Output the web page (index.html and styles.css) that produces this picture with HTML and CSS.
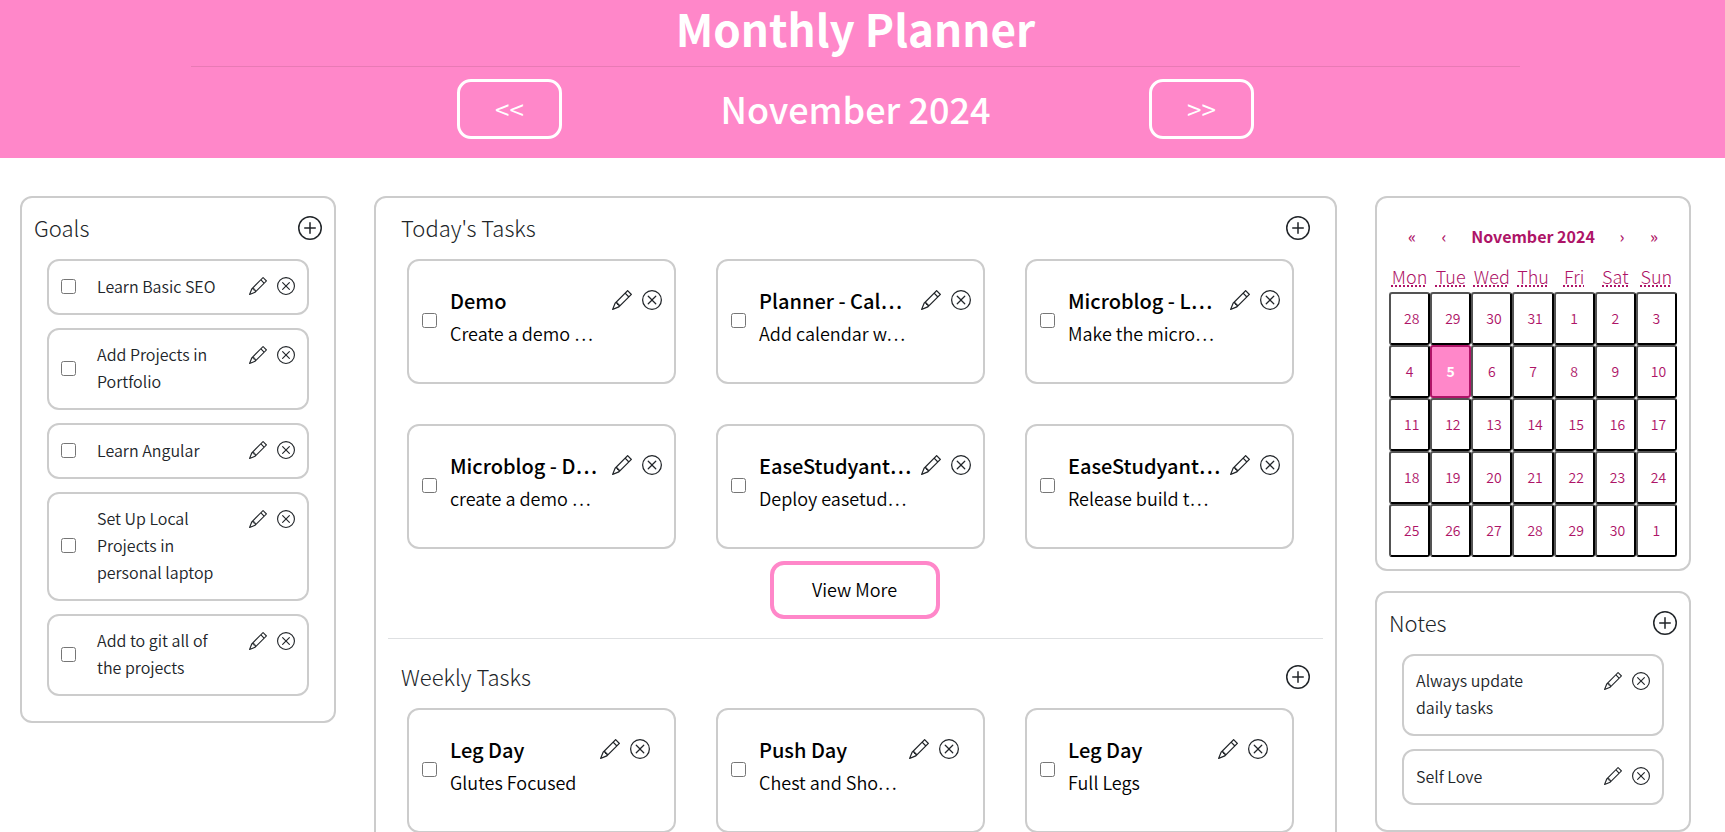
FILE: index.html
```html
<!DOCTYPE html>
<html lang="en">
<head>
<meta charset="utf-8">
<title>Monthly Planner</title>
<link rel="stylesheet" href="styles.css">
</head>
<body>
<svg class="sprite" aria-hidden="true">
  <symbol id="plus" viewBox="0 0 16 16"><path d="M8 15A7 7 0 1 1 8 1a7 7 0 0 1 0 14m0 1A8 8 0 1 0 8 0a8 8 0 0 0 0 16"/><path d="M8 4a.5.5 0 0 1 .5.5v3h3a.5.5 0 0 1 0 1h-3v3a.5.5 0 0 1-1 0v-3h-3a.5.5 0 0 1 0-1h3v-3A.5.5 0 0 1 8 4"/></symbol>
  <symbol id="pencil" viewBox="0 0 16 16"><path d="M12.146.146a.5.5 0 0 1 .708 0l3 3a.5.5 0 0 1 0 .708l-10 10a.5.5 0 0 1-.168.11l-5 2a.5.5 0 0 1-.65-.65l2-5a.5.5 0 0 1 .11-.168zM11.207 2.5 13.5 4.793 14.793 3.5 12.5 1.207zm1.586 3L10.5 3.207 4 9.707V10h.5a.5.5 0 0 1 .5.5v.5h.5a.5.5 0 0 1 .5.5v.5h.293zm-9.761 5.175-.106.106-1.528 3.821 3.821-1.528.106-.106A.5.5 0 0 1 5 12.5V12h-.5a.5.5 0 0 1-.5-.5V11h-.5a.5.5 0 0 1-.468-.325"/></symbol>
  <symbol id="cross" viewBox="0 0 16 16"><path d="M8 15A7 7 0 1 1 8 1a7 7 0 0 1 0 14m0 1A8 8 0 1 0 8 0a8 8 0 0 0 0 16"/><path d="M4.646 4.646a.5.5 0 0 1 .708 0L8 7.293l2.646-2.647a.5.5 0 0 1 .708.708L8.707 8l2.647 2.646a.5.5 0 0 1-.708.708L8 8.707l-2.646 2.647a.5.5 0 0 1-.708-.708L7.293 8 4.646 5.354a.5.5 0 0 1 0-.708"/></symbol>
</svg>

<header class="banner">
  <h1 class="banner-title">Monthly Planner</h1>
  <hr class="banner-rule">
  <div class="month-nav">
    <button class="month-button" type="button">&lt;&lt;</button>
    <h2 class="month-name">November 2024</h2>
    <button class="month-button" type="button">&gt;&gt;</button>
  </div>
</header>

<main class="board">
  <section class="panel">
    <div class="panel-head">
      <h3 class="panel-title">Goals</h3>
      <button class="icon-button" type="button" aria-label="Add goal"><svg class="icon-large"><use href="#plus"/></svg></button>
    </div>
    <ul class="list">
      <li class="item"><input class="check" type="checkbox" id="g1"><label class="item-text" for="g1">Learn Basic SEO</label><span class="actions"><button class="icon-button" type="button" aria-label="Edit"><svg class="icon-small"><use href="#pencil"/></svg></button><button class="icon-button" type="button" aria-label="Delete"><svg class="icon-small"><use href="#cross"/></svg></button></span></li>
      <li class="item"><input class="check" type="checkbox" id="g2"><label class="item-text" for="g2">Add Projects in Portfolio</label><span class="actions"><button class="icon-button" type="button" aria-label="Edit"><svg class="icon-small"><use href="#pencil"/></svg></button><button class="icon-button" type="button" aria-label="Delete"><svg class="icon-small"><use href="#cross"/></svg></button></span></li>
      <li class="item"><input class="check" type="checkbox" id="g3"><label class="item-text" for="g3">Learn Angular</label><span class="actions"><button class="icon-button" type="button" aria-label="Edit"><svg class="icon-small"><use href="#pencil"/></svg></button><button class="icon-button" type="button" aria-label="Delete"><svg class="icon-small"><use href="#cross"/></svg></button></span></li>
      <li class="item"><input class="check" type="checkbox" id="g4"><label class="item-text" for="g4">Set Up Local Projects in personal laptop</label><span class="actions"><button class="icon-button" type="button" aria-label="Edit"><svg class="icon-small"><use href="#pencil"/></svg></button><button class="icon-button" type="button" aria-label="Delete"><svg class="icon-small"><use href="#cross"/></svg></button></span></li>
      <li class="item"><input class="check" type="checkbox" id="g5"><label class="item-text" for="g5">Add to git all of the projects</label><span class="actions"><button class="icon-button" type="button" aria-label="Edit"><svg class="icon-small"><use href="#pencil"/></svg></button><button class="icon-button" type="button" aria-label="Delete"><svg class="icon-small"><use href="#cross"/></svg></button></span></li>
    </ul>
  </section>

  <div class="panel">
    <section class="tasks">
      <div class="panel-head">
        <h3 class="panel-title">Today's Tasks</h3>
        <button class="icon-button" type="button" aria-label="Add daily task"><svg class="icon-large"><use href="#plus"/></svg></button>
      </div>
      <div class="cards">
        <article class="card"><input class="check" type="checkbox" id="t1"><label class="card-text" for="t1"><strong class="card-title">Demo</strong><span class="card-note">Create a demo …</span></label><span class="actions"><button class="icon-button" type="button" aria-label="Edit"><svg class="icon-medium"><use href="#pencil"/></svg></button><button class="icon-button" type="button" aria-label="Delete"><svg class="icon-medium"><use href="#cross"/></svg></button></span></article>
        <article class="card"><input class="check" type="checkbox" id="t2"><label class="card-text" for="t2"><strong class="card-title">Planner - Cal…</strong><span class="card-note">Add calendar w…</span></label><span class="actions"><button class="icon-button" type="button" aria-label="Edit"><svg class="icon-medium"><use href="#pencil"/></svg></button><button class="icon-button" type="button" aria-label="Delete"><svg class="icon-medium"><use href="#cross"/></svg></button></span></article>
        <article class="card"><input class="check" type="checkbox" id="t3"><label class="card-text" for="t3"><strong class="card-title">Microblog - L…</strong><span class="card-note">Make the micro…</span></label><span class="actions"><button class="icon-button" type="button" aria-label="Edit"><svg class="icon-medium"><use href="#pencil"/></svg></button><button class="icon-button" type="button" aria-label="Delete"><svg class="icon-medium"><use href="#cross"/></svg></button></span></article>
        <article class="card"><input class="check" type="checkbox" id="t4"><label class="card-text" for="t4"><strong class="card-title">Microblog - D…</strong><span class="card-note">create a demo …</span></label><span class="actions"><button class="icon-button" type="button" aria-label="Edit"><svg class="icon-medium"><use href="#pencil"/></svg></button><button class="icon-button" type="button" aria-label="Delete"><svg class="icon-medium"><use href="#cross"/></svg></button></span></article>
        <article class="card"><input class="check" type="checkbox" id="t5"><label class="card-text" for="t5"><strong class="card-title">EaseStudyant…</strong><span class="card-note">Deploy easetud…</span></label><span class="actions"><button class="icon-button" type="button" aria-label="Edit"><svg class="icon-medium"><use href="#pencil"/></svg></button><button class="icon-button" type="button" aria-label="Delete"><svg class="icon-medium"><use href="#cross"/></svg></button></span></article>
        <article class="card"><input class="check" type="checkbox" id="t6"><label class="card-text" for="t6"><strong class="card-title">EaseStudyant…</strong><span class="card-note">Release build t…</span></label><span class="actions"><button class="icon-button" type="button" aria-label="Edit"><svg class="icon-medium"><use href="#pencil"/></svg></button><button class="icon-button" type="button" aria-label="Delete"><svg class="icon-medium"><use href="#cross"/></svg></button></span></article>
      </div>
      <button class="view-more" type="button">View More</button>
    </section>
    <hr class="divider">
    <section class="tasks weekly">
      <div class="panel-head">
        <h3 class="panel-title">Weekly Tasks</h3>
        <button class="icon-button" type="button" aria-label="Add weekly task"><svg class="icon-large"><use href="#plus"/></svg></button>
      </div>
      <div class="cards">
        <article class="card"><input class="check" type="checkbox" id="w1"><label class="card-text" for="w1"><strong class="card-title">Leg Day</strong><span class="card-note">Glutes Focused</span></label><span class="actions"><button class="icon-button" type="button" aria-label="Edit"><svg class="icon-medium"><use href="#pencil"/></svg></button><button class="icon-button" type="button" aria-label="Delete"><svg class="icon-medium"><use href="#cross"/></svg></button></span></article>
        <article class="card"><input class="check" type="checkbox" id="w2"><label class="card-text" for="w2"><strong class="card-title">Push Day</strong><span class="card-note">Chest and Sho…</span></label><span class="actions"><button class="icon-button" type="button" aria-label="Edit"><svg class="icon-medium"><use href="#pencil"/></svg></button><button class="icon-button" type="button" aria-label="Delete"><svg class="icon-medium"><use href="#cross"/></svg></button></span></article>
        <article class="card"><input class="check" type="checkbox" id="w3"><label class="card-text" for="w3"><strong class="card-title">Leg Day</strong><span class="card-note">Full Legs</span></label><span class="actions"><button class="icon-button" type="button" aria-label="Edit"><svg class="icon-medium"><use href="#pencil"/></svg></button><button class="icon-button" type="button" aria-label="Delete"><svg class="icon-medium"><use href="#cross"/></svg></button></span></article>
      </div>
    </section>
  </div>

  <div class="side">
    <section class="panel calendar">
      <div class="calendar-nav">
        <button class="nav-button" type="button">«</button>
        <button class="nav-button" type="button">‹</button>
        <button class="nav-label" type="button">November 2024</button>
        <button class="nav-button" type="button">›</button>
        <button class="nav-button" type="button">»</button>
      </div>
      <div class="weekdays">
        <abbr title="Monday">Mon</abbr><abbr title="Tuesday">Tue</abbr><abbr title="Wednesday">Wed</abbr><abbr title="Thursday">Thu</abbr><abbr title="Friday">Fri</abbr><abbr title="Saturday">Sat</abbr><abbr title="Sunday">Sun</abbr>
      </div>
      <div class="days">
        <button class="day" type="button">28</button><button class="day" type="button">29</button><button class="day" type="button">30</button><button class="day" type="button">31</button><button class="day" type="button">1</button><button class="day" type="button">2</button><button class="day" type="button">3</button>
        <button class="day" type="button">4</button><button class="day today" type="button">5</button><button class="day" type="button">6</button><button class="day" type="button">7</button><button class="day" type="button">8</button><button class="day" type="button">9</button><button class="day" type="button">10</button>
        <button class="day" type="button">11</button><button class="day" type="button">12</button><button class="day" type="button">13</button><button class="day" type="button">14</button><button class="day" type="button">15</button><button class="day" type="button">16</button><button class="day" type="button">17</button>
        <button class="day" type="button">18</button><button class="day" type="button">19</button><button class="day" type="button">20</button><button class="day" type="button">21</button><button class="day" type="button">22</button><button class="day" type="button">23</button><button class="day" type="button">24</button>
        <button class="day" type="button">25</button><button class="day" type="button">26</button><button class="day" type="button">27</button><button class="day" type="button">28</button><button class="day" type="button">29</button><button class="day" type="button">30</button><button class="day" type="button">1</button>
      </div>
    </section>

    <section class="panel">
      <div class="panel-head">
        <h3 class="panel-title">Notes</h3>
        <button class="icon-button" type="button" aria-label="Add note"><svg class="icon-large"><use href="#plus"/></svg></button>
      </div>
      <ul class="list">
        <li class="item"><span class="item-text">Always update daily tasks</span><span class="actions"><button class="icon-button" type="button" aria-label="Edit"><svg class="icon-small"><use href="#pencil"/></svg></button><button class="icon-button" type="button" aria-label="Delete"><svg class="icon-small"><use href="#cross"/></svg></button></span></li>
        <li class="item"><span class="item-text">Self Love</span><span class="actions"><button class="icon-button" type="button" aria-label="Edit"><svg class="icon-small"><use href="#pencil"/></svg></button><button class="icon-button" type="button" aria-label="Delete"><svg class="icon-small"><use href="#cross"/></svg></button></span></li>
      </ul>
    </section>
  </div>
</main>
</body>
</html>
```
FILE: styles.css
```css
:root {
  --pink: #ff87c9;
  --berry: #ae1467;
  --line: #cccccc;
  --ink: #212529;
}

* {
  box-sizing: border-box;
}

body {
  margin: 0;
  overflow: hidden;
  height: 100vh;
  background: #fff;
  color: var(--ink);
  font-family: "Noto Sans CJK KR", sans-serif;
  font-weight: 350;
}

button {
  font-family: inherit;
  font-weight: inherit;
  color: inherit;
  background: none;
  border: 0;
  padding: 0;
}

h1, h2, h3, ul {
  margin: 0;
  padding: 0;
}

.sprite {
  position: absolute;
  width: 0;
  height: 0;
}

.banner {
  display: flex;
  flex-direction: column;
  align-items: center;
  padding: 0 14px 19px 0;
  background: var(--pink);
  color: #fff;
}

.banner-title {
  font-size: 44px;
  line-height: 56px;
  font-weight: 700;
}

.banner-rule {
  width: calc(100% - 382px);
  margin: 10px 0 12px;
  border: 0;
  border-top: 1px solid #e87ab5;
}

.month-nav {
  display: flex;
  align-items: center;
  justify-content: space-between;
  width: 50%;
  max-width: 797px;
}

.month-button {
  width: 105px;
  height: 60px;
  border: 3px solid #fff;
  border-radius: 14px;
  padding-bottom: 2px;
  font-size: 26px;
  font-weight: 400;
}

.month-name {
  font-size: 36px;
  line-height: 58px;
  padding-bottom: 2px;
  font-weight: 500;
}

.board {
  display: grid;
  grid-template-columns: minmax(0, 316fr) minmax(0, 963fr) minmax(0, 316fr);
  align-items: start;
  gap: 38px;
  padding: 38px 34px 24px 20px;
}

.panel {
  border: 2px solid var(--line);
  border-radius: 12px;
  padding: 12px;
}

.side {
  display: flex;
  flex-direction: column;
  gap: 20px;
}

.panel-head {
  display: flex;
  align-items: center;
  justify-content: space-between;
  height: 36px;
}

.panel-title {
  font-size: 22px;
  line-height: 34px;
  padding-bottom: 2px;
  font-weight: 300;
}

.icon-button {
  display: block;
}

.icon-button svg {
  display: block;
  fill: var(--ink);
}

.icon-large {
  width: 24px;
  height: 24px;
}

.icon-medium {
  width: 20px;
  height: 20px;
}

.icon-small {
  width: 18px;
  height: 18px;
}

.list {
  display: flex;
  flex-direction: column;
  gap: 13px;
  padding: 13px;
  list-style: none;
}

.item {
  display: flex;
  align-items: center;
  min-height: 56px;
  border: 2px solid var(--line);
  border-radius: 12px;
  padding: 11px 12px 13px;
}

.check {
  flex: none;
  width: 15px;
  height: 15px;
  margin: 0;
}

.item .check {
  margin-right: 21px;
}

.item-text {
  flex: 0 1 55%;
  font-size: 16px;
  line-height: 27px;
}

.actions {
  display: flex;
  align-self: flex-start;
  gap: 10px;
  margin-left: auto;
}

.item .actions {
  padding-top: 5px;
}

.tasks {
  display: flex;
  flex-direction: column;
  padding: 0 13px;
}

.cards {
  display: grid;
  grid-template-columns: repeat(3, minmax(0, 1fr));
  gap: 40px;
  padding: 13px 16px 0 6px;
}

.card {
  display: flex;
  align-items: center;
  height: 125px;
  border: 2px solid var(--line);
  border-radius: 12px;
  padding: 0 12px 2px 13px;
  color: #000;
}

.card .check {
  margin-right: 13px;
}

.card-text {
  flex: 1;
  min-width: 0;
  padding-bottom: 8px;
  white-space: nowrap;
}

.card-title,
.card-note {
  display: block;
  line-height: 32px;
}

.card-title {
  font-size: 20px;
  font-weight: 500;
}

.card-note {
  font-size: 18px;
}

.card .actions {
  padding-top: 29px;
}

.weekly .actions {
  padding-right: 12px;
}

.view-more {
  align-self: center;
  min-width: 170px;
  height: 58px;
  margin: 12px 2px 0 0;
  border: 4px solid var(--pink);
  border-radius: 14px;
  padding-bottom: 2px;
  font-size: 18px;
  color: #000;
}

.divider {
  width: 100%;
  margin: 19px 0 20px;
  border: 0;
  border-top: 1px solid #dee0e2;
}

.calendar {
  color: var(--berry);
}

.calendar-nav {
  display: flex;
  height: 44px;
  margin: 4px 7px 6px;
}

.nav-button {
  width: 32px;
  font-size: 16px;
  font-weight: 500;
}

.nav-label {
  flex: 1;
  font-size: 16px;
  font-weight: 700;
}

.weekdays,
.days {
  display: grid;
  grid-template-columns: repeat(7, minmax(0, 1fr));
}

.weekdays {
  justify-items: center;
  padding-bottom: 3px;
  font-size: 18px;
  font-weight: 300;
  line-height: 25px;
}

.weekdays abbr {
  text-decoration: underline dotted 2px;
  text-underline-offset: 1px;
  text-decoration-skip-ink: none;
}

.day {
  height: 53px;
  border: 2px outset #000;
  border-radius: 3px;
  padding: 0 13px 2px;
  font-size: 14px;
}

.today {
  border: 2px solid var(--berry);
  background: var(--pink);
  color: #fff;
  font-weight: 700;
}
```
